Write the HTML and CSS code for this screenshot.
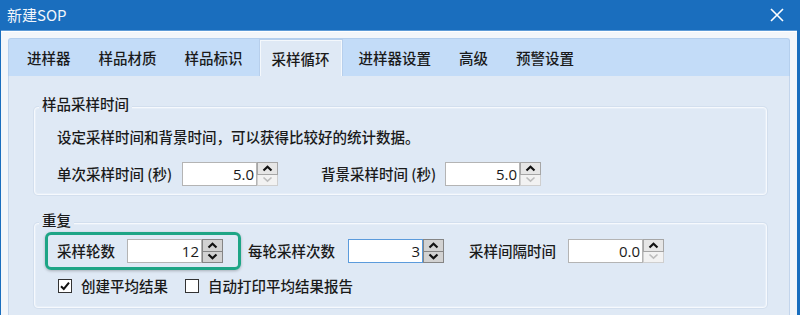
FILE: index.html
```html
<!DOCTYPE html>
<html lang="zh-CN">
<head>
<meta charset="utf-8">
<title>新建SOP</title>
<link rel="stylesheet" href="styles.css">
</head>
<body>
<div class="window">
  <div class="titlebar">
    <span class="title">新建SOP</span>
    <svg class="close" viewBox="0 0 14 14" width="14" height="14"><path d="M1 1 L13 13 M13 1 L1 13" stroke="#fff" stroke-width="1.6" fill="none"/></svg>
  </div>
  <div class="client">
    <div class="tabs">
      <div class="tab">进样器</div>
      <div class="tab">样品材质</div>
      <div class="tab">样品标识</div>
      <div class="tab active">采样循环</div>
      <div class="tab">进样器设置</div>
      <div class="tab">高级</div>
      <div class="tab">预警设置</div>
    </div>
    <div class="panel">
      <div class="group g1">
        <div class="group-title">样品采样时间</div>
        <div class="hint">设定采样时间和背景时间，可以获得比较好的统计数据。</div>
        <div class="row">
          <span class="lbl w125">单次采样时间 (秒)</span>
          <div class="spin">
            <span class="field">5.0</span>
            <span class="btns">
              <span class="btn up"><svg viewBox="0 0 11 7" width="11" height="7"><path d="M1.5 5.5 L5.5 1.8 L9.5 5.5" /></svg></span>
              <span class="btn down dis"><svg viewBox="0 0 11 7" width="11" height="7"><path d="M1.5 1.5 L5.5 5.2 L9.5 1.5" /></svg></span>
            </span>
          </div>
          <span class="lbl w124 ml43">背景采样时间 (秒)</span>
          <div class="spin">
            <span class="field">5.0</span>
            <span class="btns">
              <span class="btn up"><svg viewBox="0 0 11 7" width="11" height="7"><path d="M1.5 5.5 L5.5 1.8 L9.5 5.5" /></svg></span>
              <span class="btn down dis"><svg viewBox="0 0 11 7" width="11" height="7"><path d="M1.5 1.5 L5.5 5.2 L9.5 1.5" /></svg></span>
            </span>
          </div>
        </div>
      </div>
      <div class="group g2">
        <div class="group-title">重复</div>
        <div class="row row2">
          <div class="highlight">
            <span class="lbl w70">采样轮数</span>
            <div class="spin">
              <span class="field">12</span>
              <span class="btns on">
                <span class="btn up"><svg viewBox="0 0 11 7" width="11" height="7"><path d="M1.5 5.5 L5.5 1.8 L9.5 5.5" /></svg></span>
                <span class="btn down"><svg viewBox="0 0 11 7" width="11" height="7"><path d="M1.5 1.5 L5.5 5.2 L9.5 1.5" /></svg></span>
              </span>
            </div>
          </div>
          <span class="lbl w100 ml7">每轮采样次数</span>
          <div class="spin">
            <span class="field focus">3</span>
            <span class="btns on">
              <span class="btn up"><svg viewBox="0 0 11 7" width="11" height="7"><path d="M1.5 5.5 L5.5 1.8 L9.5 5.5" /></svg></span>
              <span class="btn down"><svg viewBox="0 0 11 7" width="11" height="7"><path d="M1.5 1.5 L5.5 5.2 L9.5 1.5" /></svg></span>
            </span>
          </div>
          <span class="lbl w99 ml25">采样间隔时间</span>
          <div class="spin">
            <span class="field">0.0</span>
            <span class="btns">
              <span class="btn up"><svg viewBox="0 0 11 7" width="11" height="7"><path d="M1.5 5.5 L5.5 1.8 L9.5 5.5" /></svg></span>
              <span class="btn down dis"><svg viewBox="0 0 11 7" width="11" height="7"><path d="M1.5 1.5 L5.5 5.2 L9.5 1.5" /></svg></span>
            </span>
          </div>
        </div>
        <div class="checks">
          <label class="check"><span class="box"><svg viewBox="0 0 12 12" width="12" height="12"><path d="M2 6.2 L4.8 9 L10 2.6" /></svg></span>创建平均结果</label>
          <label class="check"><span class="box"></span>自动打印平均结果报告</label>
        </div>
      </div>
    </div>
  </div>
</div>
</body>
</html>
```

FILE: styles.css
```css
* { box-sizing: border-box; }
html, body {
  margin: 0;
  padding: 0;
  width: 800px;
  height: 315px;
  overflow: hidden;
  background: #f3f6fa;
}
body {
  font-family: "Noto Sans CJK SC", "Noto Sans", sans-serif;
  font-size: 14.5px;
  font-weight: 500;
  color: #1a1a1a;
}
.window {
  width: 800px;
  height: 315px;
  border-left: 1px solid #1a6ebe;
  border-right: 3px solid #1a6ebe;
  display: flex;
  flex-direction: column;
}
.titlebar {
  height: 31px;
  flex: none;
  background: #1a6ebe;
  display: flex;
  align-items: center;
  justify-content: space-between;
  padding: 0 13px 0 6px;
  border-bottom: 1px solid #5d9ad6;
}
.title {
  color: #f2f6fb;
  font-size: 15px;
  font-weight: 400;
  line-height: 20px;
}
.close { display: block; }
.client {
  flex: 1;
  background: #f3f6fa;
  padding: 6px 7px 0 7px;
  display: flex;
  flex-direction: column;
  border-top: 1px solid #ffffff;
}
.tabs {
  height: 38px;
  flex: none;
  background: #c3dcf8;
  border: 1px solid #b4cfee;
  border-bottom: none;
  border-radius: 3px 3px 0 0;
  display: flex;
  align-items: stretch;
  padding-left: 4px;
}
.tab {
  padding: 0 14px;
  display: flex;
  align-items: center;
  line-height: 20px;
}
.tab.active {
  padding: 0 11px;
  margin: 1px 3px 0;
  background: #dfe9f5;
  border: 1px solid #f4f8fc;
  border-bottom: none;
  box-shadow: 0 0 0 1px #b7cfec;
  clip-path: inset(-2px -2px 0 -2px);
}
.panel {
  flex: 1;
  background: #dfe9f5;
  border-left: 1px solid #c3d5ec;
  border-right: 1px solid #c3d5ec;
  padding: 0 22px 0 25px;
}
.group {
  border: 1px solid #f6f9fd;
  box-shadow: 0 0 0 1px #d3dfee, inset 0 0 0 1px #e6eef8;
  border-radius: 4px;
}
.g1 {
  margin-top: 31px;
  padding: 0 0 8px 22px;
}
.g2 {
  margin-top: 28px;
  padding: 0 0 11px 10px;
}
.group-title {
  width: fit-content;
  line-height: 20px;
  padding: 0 3px;
  margin-top: -14px;
  background: #dfe9f5;
}
.g1 .group-title { margin-left: -18px; }
.g2 .group-title { margin-left: -6px; }
.hint {
  line-height: 20px;
  margin-top: 13px;
}
.row {
  display: flex;
  align-items: center;
  margin-top: 15px;
  height: 24px;
}
.row2 {
  margin-top: 2px;
  height: 38px;
}
.lbl {
  flex: none;
  line-height: 20px;
  white-space: nowrap;
}
.w125 { width: 125px; }
.w124 { width: 124px; }
.w100 { width: 100px; }
.w99 { width: 99px; }
.w70 { width: 70px; }
.ml43 { margin-left: 43px; }
.ml25 { margin-left: 25px; }
.ml7 { margin-left: 7px; }
.spin {
  display: flex;
  height: 24px;
  flex: none;
}
.field {
  width: 75px;
  height: 24px;
  background: #fff;
  border: 1px solid #b4b4b4;
  font-family: "Open Sans", "Noto Sans", sans-serif;
  font-size: 15px;
  font-weight: 400;
  line-height: 22px;
  text-align: right;
  padding-right: 2px;
  color: #1a1a1a;
}
.field.focus {
  border-color: #5b9bdc;
}
.btns {
  width: 21px;
  display: flex;
  flex-direction: column;
}
.btn {
  flex: 1;
  display: flex;
  align-items: center;
  justify-content: center;
  background: #e6e6e6;
  border: 1px solid #a6a6a6;
}
.btn.down { border-top: none; }
.btn svg path {
  fill: none;
  stroke: #111;
  stroke-width: 2.2;
}
.btn.dis {
  background: #f2f2f2;
  border-color: #cfcfcf;
}
.btn.dis svg path { stroke: #bdbdbd; stroke-width: 1.6; }
.btns.on .btn {
  background: #d2d2d2;
  border-color: #858585;
}
.highlight {
  display: flex;
  align-items: center;
  border: 3px solid #1ea586;
  border-radius: 6px;
  padding: 4px 15px 4px 9px;
  height: 38px;
  box-shadow: 0 1px 3px rgba(0, 0, 0, 0.25);
}
.checks {
  display: flex;
  align-items: center;
  margin-top: 6px;
  padding-left: 13px;
  height: 20px;
}
.check {
  display: flex;
  align-items: center;
  line-height: 20px;
  margin-right: 17px;
}
.box {
  width: 14px;
  height: 14px;
  background: #fff;
  border: 1px solid #333;
  margin-right: 9px;
  display: flex;
  align-items: center;
  justify-content: center;
}
.box svg path {
  fill: none;
  stroke: #111;
  stroke-width: 2;
}
```
